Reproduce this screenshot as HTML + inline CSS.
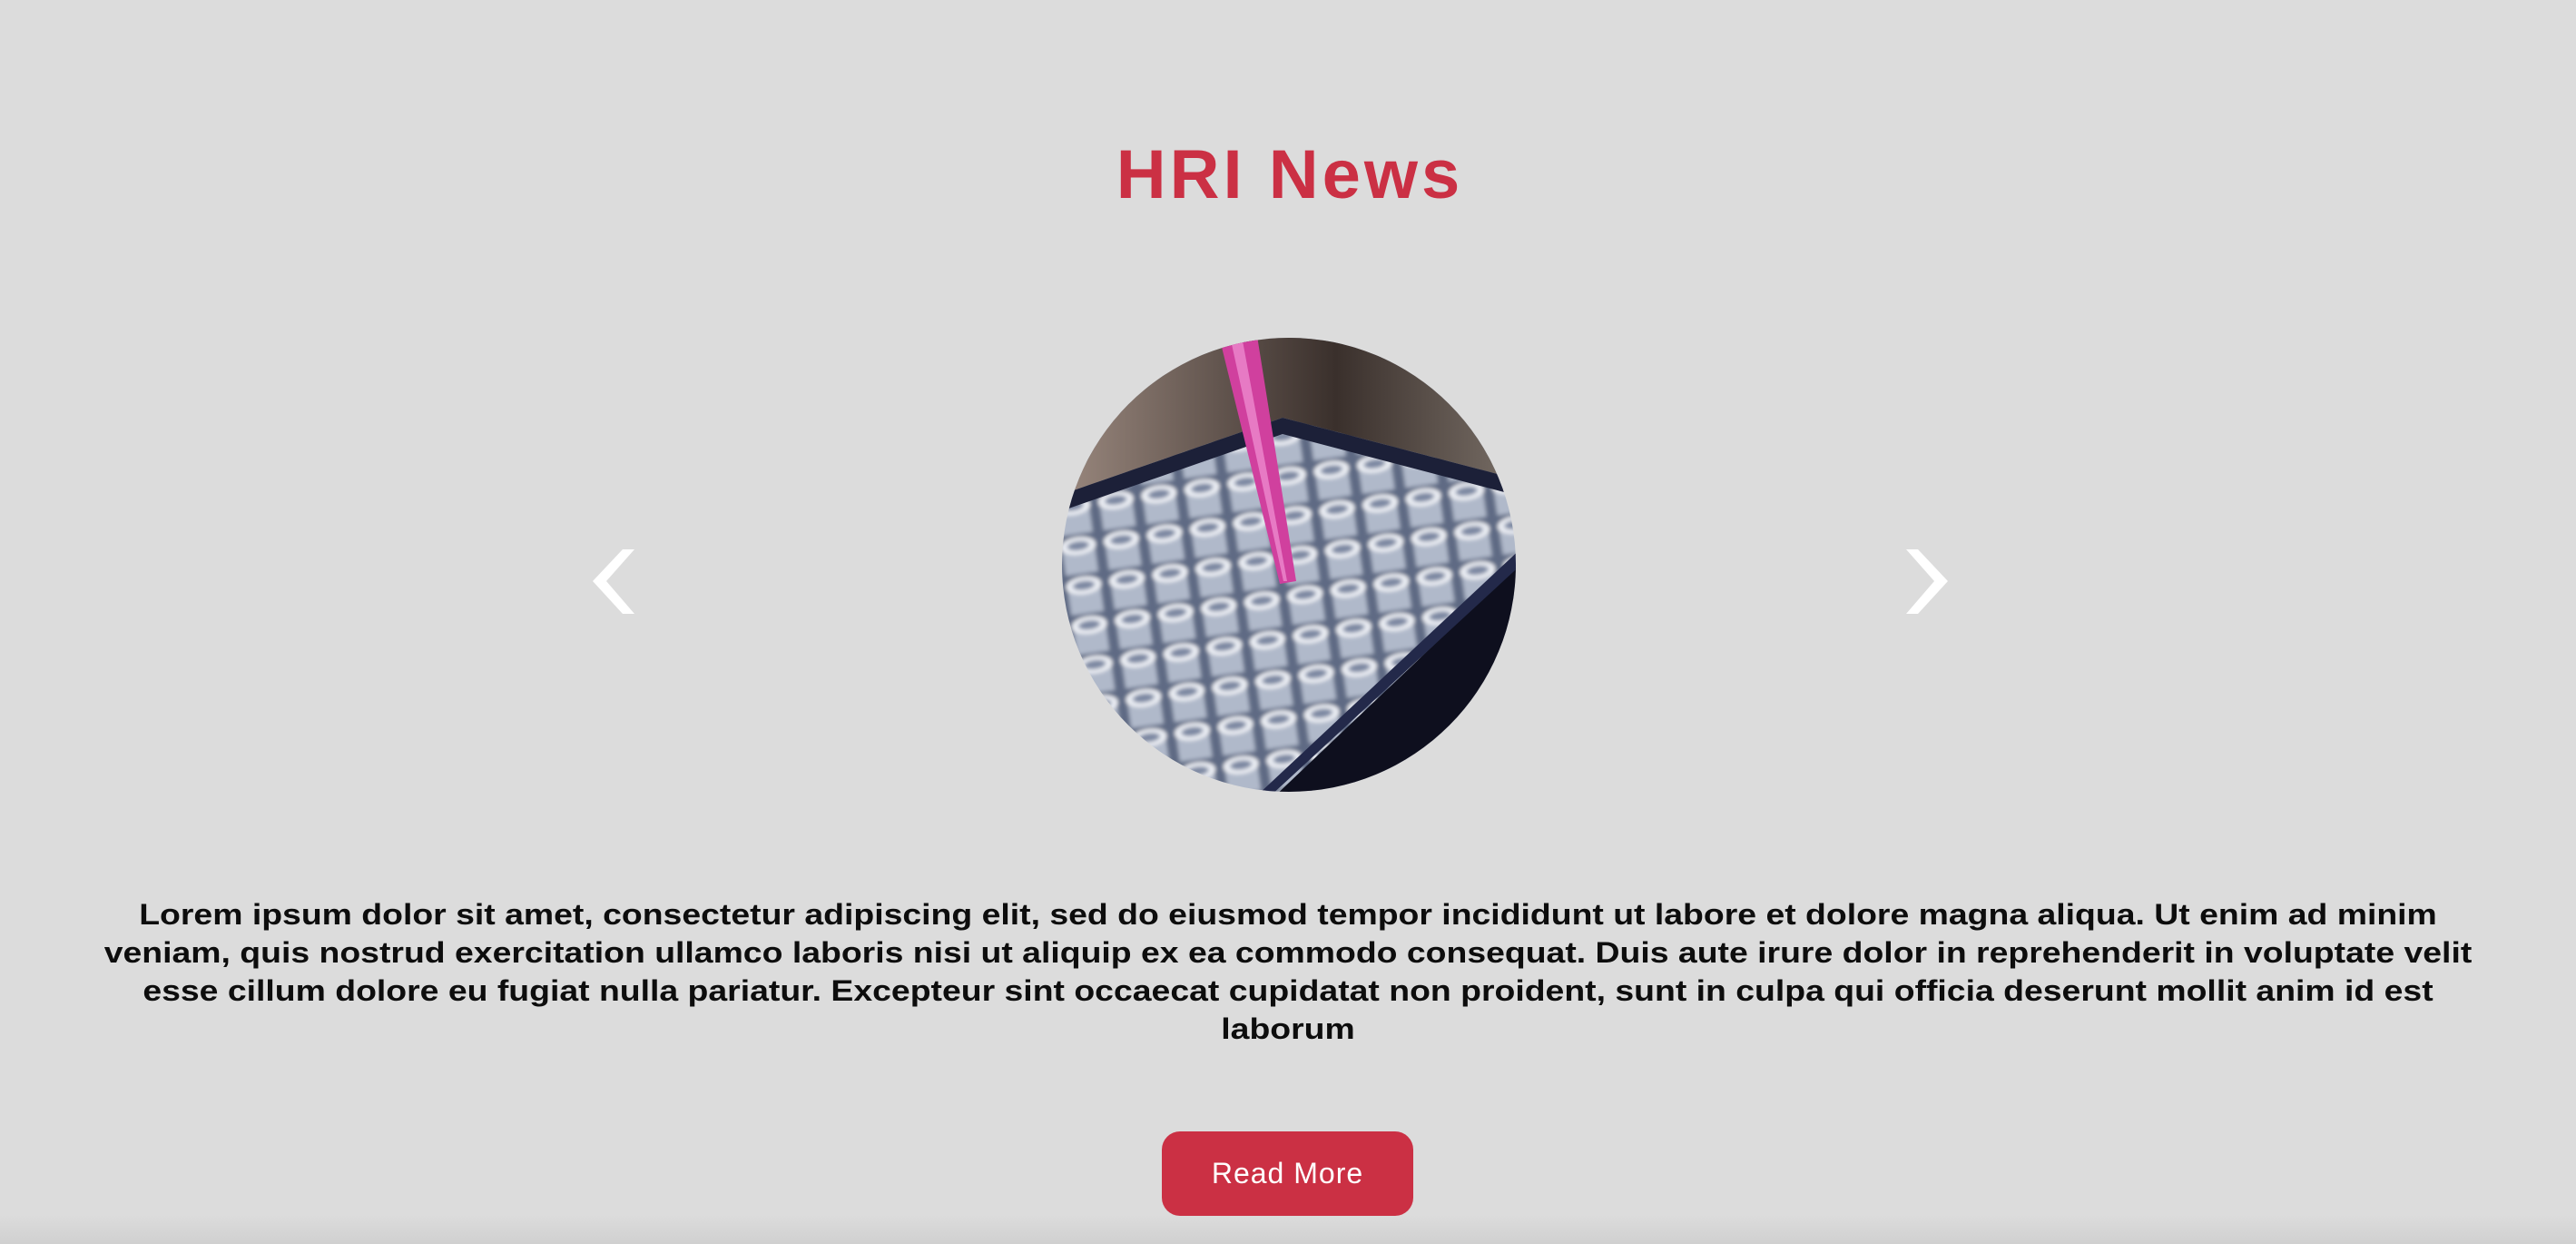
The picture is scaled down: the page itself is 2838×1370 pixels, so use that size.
<!DOCTYPE html>
<html><head><meta charset="utf-8"><style>
html,body{margin:0;padding:0}
body{width:2838px;height:1370px;background:#dcdcdc;position:relative;overflow:hidden;font-family:"Liberation Sans",Arial,sans-serif}
h1{position:absolute;left:0;width:2838px;top:148px;margin:0;text-align:center;font-size:76px;line-height:90px;font-weight:bold;color:#cb3044;letter-spacing:4px;text-indent:4px}
.p{position:absolute;left:0;width:2838px;top:986px;text-align:center;font-weight:bold;font-size:32px;line-height:42px;color:#0d0d0d;transform:scaleX(1.168);transform-origin:1419px 0}
.p div{white-space:nowrap}
.btn{position:absolute;left:1280px;top:1246px;width:277px;height:93px;border-radius:20px;background:#cb3044;color:#fff;font-size:32px;line-height:93px;text-align:center;letter-spacing:1px}
.sh{position:absolute;left:0;top:1338px;width:2838px;height:32px;background:linear-gradient(#dcdcdc,#d0d0d0)}
</style></head><body>
<div class="sh"></div>
<h1>HRI News</h1>
<svg width="2838" height="1370" style="position:absolute;left:0;top:0">
<defs>
<clipPath id="c"><circle cx="1420" cy="622" r="250"/></clipPath>
<pattern id="t" x="1170" y="470" width="48" height="44" patternUnits="userSpaceOnUse" patternTransform="rotate(-8 1420 622)">
<rect width="48" height="44" fill="#5f6a84"/>
<rect x="5" y="10" width="36" height="32" fill="#b0b9ca"/>
<ellipse cx="23" cy="11" rx="18" ry="8" fill="#e4e8f0" stroke="#f6f7fa" stroke-width="3"/>
<ellipse cx="23" cy="11" rx="12" ry="5" fill="#7d88a2"/>
</pattern>
<linearGradient id="bg" x1="0" y1="0" x2="1" y2="0"><stop offset="0" stop-color="#9c8a80"/><stop offset=".6" stop-color="#3a302c"/><stop offset="1" stop-color="#7a7068"/></linearGradient>
<filter id="b"><feGaussianBlur stdDeviation="2.5"/></filter>
</defs>
<g clip-path="url(#c)">
<rect x="1160" y="360" width="520" height="530" fill="url(#t)" filter="url(#b)"/>
<polygon points="1160,360 1680,360 1680,530 1413,460 1160,548" fill="url(#bg)"/>
<polygon points="1160,548 1413,460 1680,530 1680,548 1413,478 1160,566" fill="#1c2038"/>
<polygon points="1680,615 1680,900 1380,900" fill="#0e0f1e"/>
<polygon points="1680,600 1680,618 1385,890 1370,890" fill="#23294a"/>
<polygon points="1343,370 1385,370 1428,640 1410,643" fill="#d0409e"/>
<polygon points="1355,370 1368,370 1418,640 1414,640" fill="#e77ac4"/>
</g>
<polygon points="699,605 686,605 653,640 686,676 699,676 668,640" fill="#fff"/>
<polygon points="2100,605 2113,605 2146,640 2113,676 2100,676 2131,640" fill="#fff"/>
</svg>
<div class="p">
<div>Lorem ipsum dolor sit amet, consectetur adipiscing elit, sed do eiusmod tempor incididunt ut labore et dolore magna aliqua. Ut enim ad minim</div>
<div>veniam, quis nostrud exercitation ullamco laboris nisi ut aliquip ex ea commodo consequat. Duis aute irure dolor in reprehenderit in voluptate velit</div>
<div>esse cillum dolore eu fugiat nulla pariatur. Excepteur sint occaecat cupidatat non proident, sunt in culpa qui officia deserunt mollit anim id est</div>
<div>laborum</div>
</div>
<div class="btn">Read More</div>
</body></html>
